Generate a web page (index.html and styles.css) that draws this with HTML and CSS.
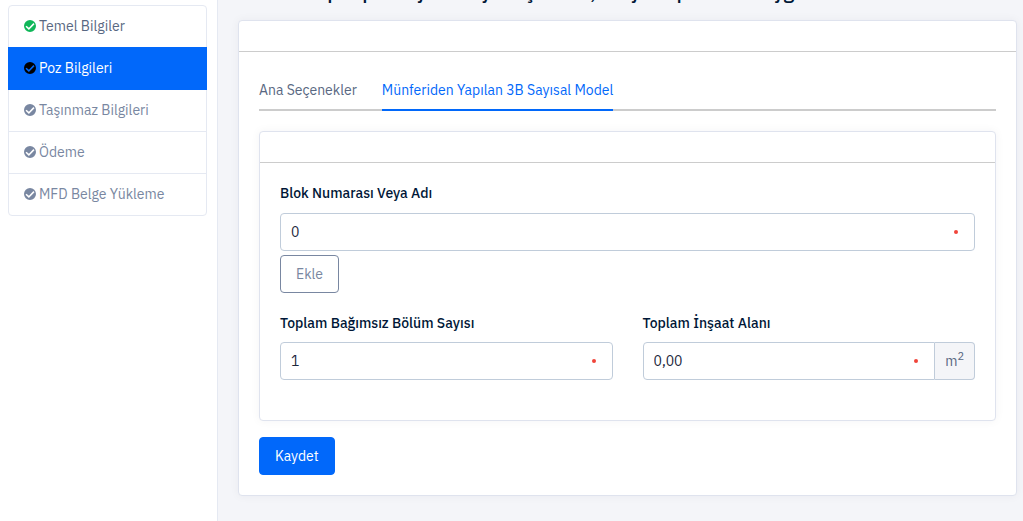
FILE: index.html
```html
<!DOCTYPE html>
<html lang="tr">
<head>
<meta charset="utf-8">
<meta name="viewport" content="width=device-width, initial-scale=1">
<title>Poz Bilgileri</title>
<link rel="stylesheet" href="styles.css">
</head>
<body>
<svg class="defs" aria-hidden="true">
  <symbol id="check" viewBox="0 0 12 12">
    <path fill="currentColor" fill-rule="evenodd" d="M6 0a6 6 0 1 1 0 12A6 6 0 0 1 6 0zM2.5 5.7 1.5 6.8 4.9 10 10.5 4.2 9.4 3.1 4.9 7.8z"/>
  </symbol>
</svg>
<div class="layout">
  <aside class="sidebar">
    <nav class="steps">
      <a class="step done" href="#temel"><svg class="icon"><use href="#check"/></svg>Temel Bilgiler</a>
      <a class="step active" href="#poz" aria-current="step"><svg class="icon"><use href="#check"/></svg>Poz Bilgileri</a>
      <a class="step" href="#tasinmaz"><svg class="icon"><use href="#check"/></svg>Taşınmaz Bilgileri</a>
      <a class="step" href="#odeme"><svg class="icon"><use href="#check"/></svg>Ödeme</a>
      <a class="step" href="#mfd"><svg class="icon"><use href="#check"/></svg>MFD Belge Yükleme</a>
    </nav>
  </aside>
  <main class="main">
    <h1 class="title">Grup tapu ve yeri ve yanlış adedi, bir yer tipler olan uygun</h1>
    <section class="card">
      <header class="card-header"></header>
      <form class="card-body">
        <nav class="tabs">
          <a class="tab" href="#ana">Ana Seçenekler</a>
          <a class="tab selected" href="#model" aria-current="page">Münferiden Yapılan 3B Sayısal Model</a>
        </nav>
        <section class="card inner">
          <header class="card-header"></header>
          <div class="card-body fields">
            <div class="field">
              <label for="blok">Blok Numarası Veya Adı</label>
              <div class="control required"><input id="blok" type="text" value="0"></div>
              <button class="btn outline" type="button">Ekle</button>
            </div>
            <div class="row">
              <div class="field">
                <label for="bolum">Toplam Bağımsız Bölüm Sayısı</label>
                <div class="control required"><input id="bolum" type="text" value="1"></div>
              </div>
              <div class="field">
                <label for="alan">Toplam İnşaat Alanı</label>
                <div class="group">
                  <div class="control required"><input id="alan" type="text" value="0,00"></div>
                  <span class="unit"><span>m<sup>2</sup></span></span>
                </div>
              </div>
            </div>
          </div>
        </section>
        <button class="btn primary" type="submit">Kaydet</button>
      </form>
    </section>
  </main>
</div>
</body>
</html>
```
FILE: styles.css
```css
* { box-sizing: border-box; }
body {
  margin: 0;
  background: #f4f5f9;
  color: #001737;
  font: 14px/21px "IBM Plex Sans", Roboto, sans-serif;
}
.defs { display: none; }
.layout { display: flex; height: 100vh; overflow: hidden; }
.sidebar {
  flex: 0 0 218px;
  padding: 5px 10px 5px 8px;
  background: #fff;
  border-right: 1px solid #e5e9f2;
}
.steps { border: 1px solid #e5e9f2; border-radius: 4px; }
.step {
  display: flex;
  align-items: center;
  gap: 3px;
  height: 42px;
  padding: 0 15px;
  border-bottom: 1px solid #e5e9f2;
  color: #7987a1;
  text-decoration: none;
}
.step:last-child { border-bottom: 0; height: 41px; }
.step.done { color: #596882; border-bottom: 0; height: 41px; }
.step.done .icon { color: #10b759; }
.step.active {
  height: 43px;
  margin: 0 -1px;
  padding: 0 16px;
  background: #0168fa;
  border-color: #0168fa;
  color: #fff;
}
.step.active .icon { color: #000; }
.icon { width: 12px; height: 12px; flex: none; margin-bottom: 1px; }
.main { flex: 1; min-width: 0; padding: 0 6px 24px 20px; }
.title {
  margin: -20px 0 16px;
  padding-left: 56px;
  font-size: 20px;
  font-weight: 500;
  line-height: 24px;
  white-space: nowrap;
}
.card {
  background: #fff;
  border: 1px solid #dfe3ee;
  border-radius: 4px;
  box-shadow: 0 0 10px rgba(28, 39, 60, 0.05);
}
.card-header { height: 31px; border-bottom: 1px solid #ccc; }
.card-body { padding: 20px; }
.tabs {
  display: flex;
  gap: 25px;
  margin-bottom: 20px;
  box-shadow: inset 0 -2px #ccc;
}
.tab {
  padding: 8px 0 9px;
  border-bottom: 2px solid transparent;
  color: #596882;
  line-height: 20px;
  text-decoration: none;
}
.tab.selected { color: #0168fa; border-color: #0168fa; }
.inner { margin-bottom: 16px; }
.fields { padding-bottom: 40px; }
.row {
  display: grid;
  grid-template-columns: 1fr 1fr;
  gap: 30px;
  margin-top: 20px;
}
label { display: block; margin-bottom: 8px; font-weight: 500; }
.fields > .field > label { margin-bottom: 9px; }
.control { position: relative; flex: 1; }
.control.required::after {
  content: "";
  position: absolute;
  top: 17px;
  right: 17px;
  width: 4px;
  height: 4px;
  border-radius: 50%;
  background: #f0443a;
}
input {
  display: block;
  width: 100%;
  height: 38px;
  padding: 0 10px;
  border: 1px solid #c0ccda;
  border-radius: 4px;
  background: #fff;
  color: #1c273c;
  font: inherit;
}
.group { display: flex; }
.group input { border-radius: 4px 0 0 4px; }
.unit {
  display: flex;
  align-items: center;
  padding: 0 10px;
  border: 1px solid #c0ccda;
  border-left: 0;
  border-radius: 0 4px 4px 0;
  background: #f4f5f8;
  color: #596882;
}
sup { font-size: 11px; line-height: 0; }
.btn {
  display: block;
  height: 38px;
  padding: 0 15px;
  border: 1px solid;
  border-radius: 4px;
  font: inherit;
}
.outline { margin-top: 4px; background: #fff; border-color: #7987a1; color: #7987a1; }
.primary { background: #0168fa; border-color: #0168fa; color: #fff; }
```
